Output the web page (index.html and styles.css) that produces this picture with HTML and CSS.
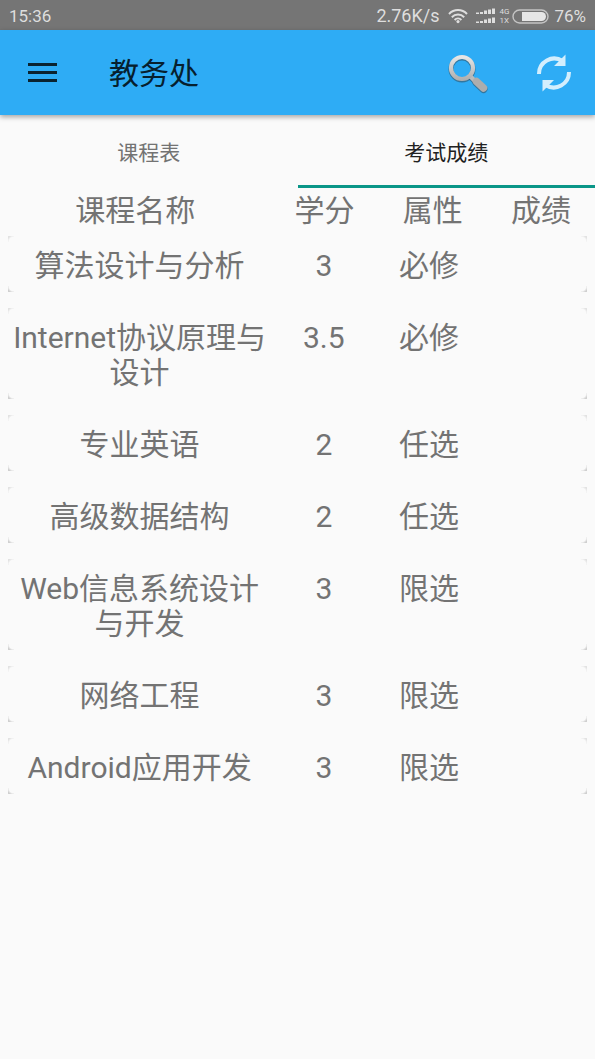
FILE: index.html
```html
<!DOCTYPE html>
<html lang="zh-CN">
<head>
<meta charset="utf-8">
<meta name="viewport" content="width=device-width, initial-scale=1">
<title>教务处</title>
<link rel="stylesheet" href="styles.css">
</head>
<body>
<div class="status-bar">
  <span class="clock">15:36</span>
  <span class="speed">2.76K/s</span>
  <svg class="wifi" width="20" height="16" viewBox="0 0 20 16" fill="none" stroke="currentColor" stroke-width="2" aria-hidden="true">
    <path d="M1 6C6 .8 14 .8 19 6"/>
    <path d="M3.800 9.200c3.500-3.500 8.900-3.500 12.400 0"/>
    <path d="M6.600 12c1.900-1.900 4.900-1.900 6.800 0"/>
    <circle cx="10" cy="13.600" r="1.600" fill="currentColor" stroke="none"/>
  </svg>
  <svg class="signal" width="19" height="17" viewBox="0 0 19 17" fill="currentColor" aria-hidden="true">
    <path d="M0 4.500h3V6H0zM4 4h3v2H4zM8 2.500h3V6H8zM12 1.500h3V6h-3zM16 .5h3V6h-3z"/>
    <path d="M0 13.500h3V15H0zM4 13h3v2H4zM8 11.500h3V15H8zM12 10.500h3V15h-3zM16 9.500h3V15h-3z"/>
  </svg>
  <span class="network"><span>4G</span><span>1X</span></span>
  <svg class="battery" width="37" height="15" viewBox="0 0 37 15" aria-hidden="true">
    <rect x="1" y="1" width="35" height="13" rx="6.500" fill="none" stroke="#c4c4c4" stroke-width="1.400"/>
    <path d="M10 3h19.500a4.500 4.500 0 0 1 0 9H10z" fill="#e6e6e6"/>
  </svg>
  <span class="percent">76%</span>
</div>
<header class="app-bar">
  <button class="icon-button menu" type="button" aria-label="菜单">
    <svg width="30" height="22" viewBox="0 0 30 22" fill="#0a2330" aria-hidden="true">
      <path d="M0 1h29v3H0zM0 9h29v3H0zM0 17h29v3H0z"/>
    </svg>
  </button>
  <h1 class="title">教务处</h1>
  <button class="icon-button" type="button" aria-label="搜索">
    <svg width="44" height="44" viewBox="0 0 44 44" aria-hidden="true">
      <defs>
        <linearGradient id="metal" x1="0" y1="0" x2="0" y2="1">
          <stop offset="0" stop-color="#e6e6e6"/>
          <stop offset="1" stop-color="#b0b0b0"/>
        </linearGradient>
      </defs>
      <g fill="none" stroke="#32596f" stroke-opacity=".65" stroke-linecap="round" transform="translate(0 1)">
        <circle cx="16" cy="17" r="11" stroke-width="5"/>
        <path d="M24 25l4 4" stroke-width="5"/>
        <path d="M30.500 30.500l7 6.500" stroke-width="8"/>
      </g>
      <path d="M24 25l5 5" stroke="#bcbcbc" stroke-width="4.500"/>
      <path d="M30.500 30.500l7 6.500" stroke="#adadad" stroke-width="7.500" stroke-linecap="round"/>
      <circle cx="16" cy="17" r="11" fill="none" stroke="url(#metal)" stroke-width="4.200"/>
    </svg>
  </button>
  <button class="icon-button" type="button" aria-label="刷新">
    <svg width="36" height="38" viewBox="0 0 36 38" aria-hidden="true">
      <g fill="none" stroke="#d3eefd" stroke-width="4">
        <path d="M3 20A15.200 15.200 0 0 1 26.500 7"/>
        <path d="M33 18A15.200 15.200 0 0 1 9.500 31"/>
      </g>
      <path d="M29.500 .5V12H18zM6.500 37.500V26H18zM22 5l6-1v5zM14 33l-6 1v-5z" fill="#d3eefd"/>
    </svg>
  </button>
</header>
<nav class="tabs" role="tablist">
  <button class="tab" type="button" role="tab" aria-selected="false">课程表</button>
  <button class="tab active" type="button" role="tab" aria-selected="true">考试成绩</button>
</nav>
<main>
  <table class="grades">
    <thead>
      <tr class="row head"><th>课程名称</th><th>学分</th><th>属性</th><th>成绩</th></tr>
    </thead>
    <tbody class="cards">
      <tr class="row card"><td>算法设计与分析</td><td>3</td><td>必修</td><td></td></tr>
      <tr class="row card"><td>Internet协议原理与设计</td><td>3.5</td><td>必修</td><td></td></tr>
      <tr class="row card"><td>专业英语</td><td>2</td><td>任选</td><td></td></tr>
      <tr class="row card"><td>高级数据结构</td><td>2</td><td>任选</td><td></td></tr>
      <tr class="row card"><td>Web信息系统设计与开发</td><td>3</td><td>限选</td><td></td></tr>
      <tr class="row card"><td>网络工程</td><td>3</td><td>限选</td><td></td></tr>
      <tr class="row card"><td>Android应用开发</td><td>3</td><td>限选</td><td></td></tr>
    </tbody>
  </table>
</main>
</body>
</html>
```
FILE: styles.css
```css
* {
  box-sizing: border-box;
}

body {
  margin: 0;
  background: #fafafa;
  color: #737373;
  font-family: Roboto, "Noto Sans CJK SC", sans-serif;
}

button {
  padding: 0;
  border: 0;
  background: none;
  font: inherit;
  color: inherit;
}

svg {
  display: block;
}

.status-bar {
  display: flex;
  align-items: center;
  height: 30px;
  padding: 2px 9px 0;
  background: #757575;
  color: #dedede;
  font-size: 17px;
  line-height: 28px;
}

.clock {
  margin-right: auto;
}

.speed {
  font-size: 18px;
}

.wifi {
  margin-left: 9px;
}

.signal {
  margin-left: 8px;
}

.network {
  display: flex;
  flex-direction: column;
  margin: 0 3px 0 4px;
  font-size: 8px;
  line-height: 9px;
}

.percent {
  margin-left: 5px;
}

.app-bar {
  display: flex;
  align-items: center;
  gap: 46px;
  height: 85px;
  padding: 0 23px 0 28px;
  background: #2eacf5;
  box-shadow: 0 2px 5px rgba(0, 0, 0, 0.35);
}

.title {
  flex: 1;
  margin: 0 0 0 5px;
  padding-top: 3px;
  color: #06202e;
  font-size: 30px;
  font-weight: 400;
  line-height: 36px;
}

.tabs {
  display: flex;
  height: 73px;
}

.tab {
  flex: 1;
  padding-top: 5px;
  border-bottom: 3px solid transparent;
  font-size: 21px;
  line-height: 24px;
}

.tab.active {
  border-color: #0a9688;
  color: #212121;
}

.grades {
  display: block;
  font-size: 30px;
  line-height: 35px;
  text-align: center;
}

.row {
  display: grid;
  grid-template-columns: 5fr 2fr 2fr 2fr;
}

.head {
  padding: 5px 0 3px;
}

th,
td {
  padding: 0;
  font-weight: 400;
}

thead {
  display: block;
}

.cards {
  display: flex;
  flex-direction: column;
  gap: 16px;
  padding: 5px 8px;
}

.card {
  padding: 12px 0 9px;
  background:
    radial-gradient(circle at 100% 100%, transparent 5px, #e2e2e2 7px) 0 0 / 6px 6px,
    radial-gradient(circle at 0 100%, transparent 5px, #e2e2e2 7px) 100% 0 / 6px 6px,
    radial-gradient(circle at 100% 0, transparent 5px, #d0d0d0 7px) 0 100% / 6px 6px,
    radial-gradient(circle at 0 0, transparent 5px, #d0d0d0 7px) 100% 100% / 6px 6px;
  background-repeat: no-repeat;
}
```
